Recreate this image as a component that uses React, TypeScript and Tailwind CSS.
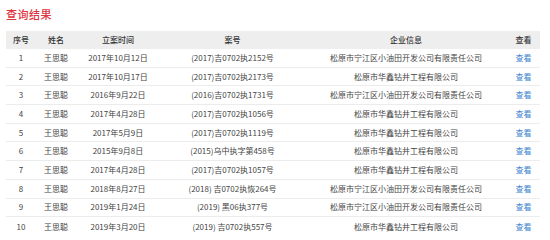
import React from "react";

const rows: [string, string, string, string, string][] = [
  ["1", "王思聪", "2017年10月12日", "(2017)吉0702执2152号", "松原市宁江区小油田开发公司有限责任公司"],
  ["2", "王思聪", "2017年10月17日", "(2017)吉0702执2173号", "松原市华鑫钻井工程有限公司"],
  ["3", "王思聪", "2016年9月22日", "(2016)吉0702执1731号", "松原市宁江区小油田开发公司有限责任公司"],
  ["4", "王思聪", "2017年4月28日", "(2017)吉0702执1056号", "松原市华鑫钻井工程有限公司"],
  ["5", "王思聪", "2017年5月9日", "(2017)吉0702执1119号", "松原市华鑫钻井工程有限公司"],
  ["6", "王思聪", "2015年9月8日", "(2015)乌中执字第458号", "松原市华鑫钻井工程有限公司"],
  ["7", "王思聪", "2017年4月28日", "(2017)吉0702执1057号", "松原市华鑫钻井工程有限公司"],
  ["8", "王思聪", "2018年8月27日", "(2018) 吉0702执恢264号", "松原市宁江区小油田开发公司有限责任公司"],
  ["9", "王思聪", "2019年1月24日", "(2019) 黑06执377号", "松原市宁江区小油田开发公司有限责任公司"],
  ["10", "王思聪", "2019年3月20日", "(2019) 吉0702执557号", "松原市华鑫钻井工程有限公司"],
];

const cols = "grid grid-cols-[30px_40px_84px_145px_202px_33px]";

export default function App() {
  return (
    <div
      className="w-[550px] h-[240px] bg-white overflow-hidden"
      style={{ fontFamily: '"Noto Sans CJK SC", "Noto Sans", sans-serif' }}
    >
      <div className="pl-[6px] pt-[7px] h-[31px]">
        <div className="text-[11px] leading-[14px] font-medium text-[#e0343f] tracking-[0.5px]">查询结果</div>
      </div>
      <div className="ml-[6px] w-[534px]">
        <div className={`${cols} h-[18px] bg-[#eeeeee] text-[8px] font-medium text-[#333] items-center text-center`}>
          <div>序号</div>
          <div>姓名</div>
          <div>立案时间</div>
          <div>案号</div>
          <div>企业信息</div>
          <div>查看</div>
        </div>
        {rows.map((r, i) => (
          <div
            key={i}
            className={`${cols} h-[18.7px] text-[8px] text-[#444] items-center text-center ${
              i < rows.length - 1 ? "border-b border-[#ececec]" : ""
            }`}
          >
            <div>{r[0]}</div>
            <div>{r[1]}</div>
            <div>{r[2]}</div>
            <div className="whitespace-pre">{r[3]}</div>
            <div>{r[4]}</div>
            <div className="text-[#3c82d0]">查看</div>
          </div>
        ))}
      </div>
    </div>
  );
}
